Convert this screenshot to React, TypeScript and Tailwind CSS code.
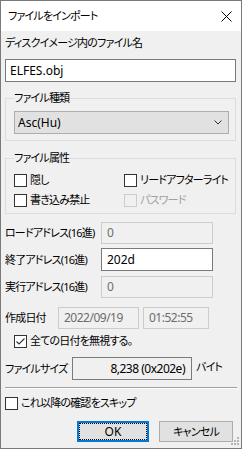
import React from "react"

const font = "font-['Noto_Sans','Noto_Sans_CJK_JP',sans-serif] [font-feature-settings:'palt']"
// Latin-only text keeps the normal size and spacing
const latin = "text-[12px] tracking-normal"
const digits = "text-[12px] tracking-[-0.5px]"

function CheckBox({ checked = false, disabled = false }: { checked?: boolean; disabled?: boolean }) {
  return (
    <span
      className={`flex h-[13px] w-[13px] shrink-0 items-center justify-center border ${
        disabled ? "border-[#cccccc] bg-[#f0f0f0]" : "border-[#333333] bg-white"
      }`}
    >
      {checked && (
        <svg width="11" height="11" viewBox="0 0 11 11">
          <path d="M1.5 5.5 L4 8 L9.5 2.5" fill="none" stroke="#333333" strokeWidth="1.1" />
        </svg>
      )}
    </span>
  )
}

function Option({ label, checked, disabled }: { label: string; checked?: boolean; disabled?: boolean }) {
  return (
    <div className="flex h-[20px] items-center gap-[3px] whitespace-nowrap">
      <CheckBox checked={checked} disabled={disabled} />
      <span className={disabled ? "text-[#a0a0a0]" : "text-black"}>{label}</span>
    </div>
  )
}

function TextBox({ value, width }: { value: string; width: string }) {
  return (
    <div
      className={`flex h-[22px] shrink-0 items-center border border-[#cccccc] bg-[#f0f0f0] px-[5px] text-[#6d6d6d] ${digits} ${width}`}
    >
      {value}
    </div>
  )
}

export default function App() {
  return (
    <div className={`${font} relative flex h-[449px] w-[242px] flex-col overflow-hidden whitespace-nowrap border border-[#7a7a7a] bg-[#f0f0f0] text-[11px] leading-[16px] tracking-[-0.8px] text-black`}>
      {/* title bar */}
      <div className="flex h-[30px] shrink-0 items-center justify-between bg-white pl-[7px] pr-[9px]">
        <span>ファイルをインポート</span>
        <svg width="11" height="11" viewBox="0 0 11 11">
          <path d="M0.5 0.5 L10.5 10.5 M10.5 0.5 L0.5 10.5" stroke="#000" strokeWidth="1" />
        </svg>
      </div>

      <div className="flex flex-col pl-[4px] pr-[5px]">
        <div className="mt-[4px] h-[16px]">ディスクイメージ内のファイル名</div>
        <div className={`mt-[8px] flex h-[23px] w-[231px] items-center border border-[#7a7a7a] bg-white px-[4px] ${latin}`}>
          ELFES.obj
        </div>

        <fieldset className="mt-[8px] w-[231px] border border-[#dcdcdc] pb-[6px] pl-[8px] pr-[6px]">
          <legend className="h-[16px]">ファイル種類</legend>
          <div className={`mt-[5px] flex h-[23px] w-[215px] items-center justify-between border border-[#adadad] bg-[#e1e1e1] pl-[3px] pr-[6px] ${latin}`}>
            <span>Asc(Hu)</span>
            <svg width="8" height="5" viewBox="0 0 8 5">
              <path d="M0.5 0.5 L4 4 L7.5 0.5" fill="none" stroke="#333" strokeWidth="1" />
            </svg>
          </div>
        </fieldset>

        <fieldset className="mt-[9px] w-[231px] border border-[#dcdcdc] pb-[3px] pl-[8px] pt-[4px]">
          <legend className="h-[16px]">ファイル属性</legend>
          <div className="grid grid-cols-[110px_1fr]">
            <Option label="隠し" />
            <Option label="リードアフターライト" />
            <Option label="書き込み禁止" />
            <Option label="パスワード" disabled />
          </div>
        </fieldset>

        <div className="mt-[8px] flex items-center">
          <span className="w-[96px] shrink-0">ロードアドレス(16進)</span>
          <TextBox value="0" width="w-[112px]" />
        </div>
        <div className="mt-[4px] flex items-center">
          <span className="w-[96px] shrink-0">終了アドレス(16進)</span>
          <div className={`flex h-[23px] w-[112px] shrink-0 items-center border border-[#7a7a7a] bg-white px-[5px] ${latin}`}>202d</div>
        </div>
        <div className="mt-[5px] flex items-center">
          <span className="w-[96px] shrink-0">実行アドレス(16進)</span>
          <TextBox value="0" width="w-[112px]" />
        </div>
        <div className="mt-[9px] flex items-center">
          <span className="w-[53px] shrink-0">作成日付</span>
          <TextBox value="2022/09/19" width="w-[81px]" />
          <div className="w-[4px] shrink-0" />
          <TextBox value="01:52:55" width="w-[66px]" />
        </div>

        <div className="ml-[9px] mt-[2px]">
          <Option label="全ての日付を無視する。" checked />
        </div>

        <div className="mt-[6px] flex items-center">
          <span className="w-[67px] shrink-0">ファイルサイズ</span>
          <div className={`flex h-[23px] w-[120px] shrink-0 items-center justify-end border border-[#7a7a7a] bg-[#f0f0f0] px-[6px] ${digits}`}>
            8,238 (0x202e)
          </div>
          <span className="ml-[4px] -mt-[3px]">バイト</span>
        </div>

        <div className="mt-[7px] h-[2px] w-[232px] border-t border-[#a0a0a0] bg-white" />

        <div className="mt-[4px]">
          <Option label="これ以降の確認をスキップ" />
        </div>

        <div className="mt-[8px] flex">
          <div className="ml-[72px] flex h-[21px] w-[72px] items-center justify-center border-2 border-[#0078d7] bg-[#e1e1e1]">
            <div className={`flex h-full w-full items-center justify-center border border-dotted border-black ${latin}`}>OK</div>
          </div>
          <div className="ml-[10px] flex h-[21px] w-[74px] items-center justify-center border border-[#adadad] bg-[#e1e1e1]">
            キャンセル
          </div>
        </div>
      </div>

      {/* size grip */}
      <svg className="absolute bottom-[2px] right-[1px]" width="9" height="9" viewBox="0 0 9 9">
        <rect x="6" y="0" width="2" height="2" fill="#b4b4b4" />
        <rect x="3" y="3" width="2" height="2" fill="#b4b4b4" />
        <rect x="6" y="3" width="2" height="2" fill="#b4b4b4" />
        <rect x="0" y="6" width="2" height="2" fill="#b4b4b4" />
        <rect x="3" y="6" width="2" height="2" fill="#b4b4b4" />
        <rect x="6" y="6" width="2" height="2" fill="#b4b4b4" />
      </svg>
    </div>
  )
}
